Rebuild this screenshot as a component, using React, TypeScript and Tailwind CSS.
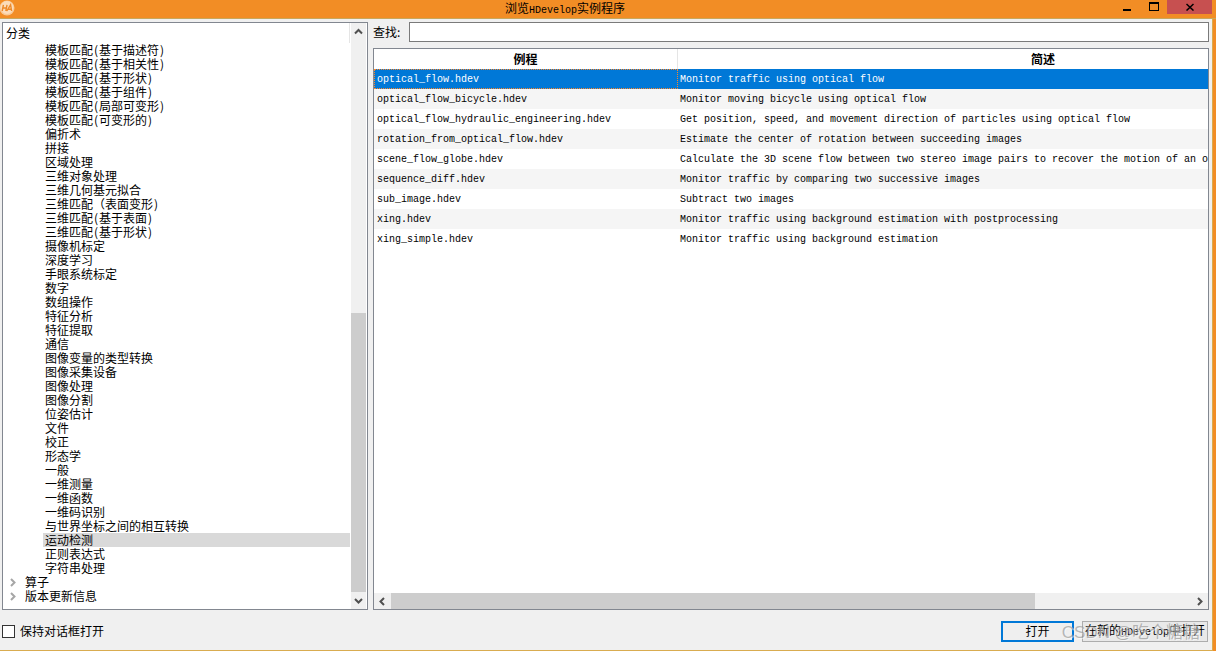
import { useState } from 'react';
import { clsx } from 'clsx';

interface Example {
  file: string;
  description: string;
}

const categories = [
  '模板匹配(基于描述符)',
  '模板匹配(基于相关性)',
  '模板匹配(基于形状)',
  '模板匹配(基于组件)',
  '模板匹配(局部可变形)',
  '模板匹配(可变形的)',
  '偏折术',
  '拼接',
  '区域处理',
  '三维对象处理',
  '三维几何基元拟合',
  '三维匹配（表面变形)',
  '三维匹配(基于表面)',
  '三维匹配(基于形状)',
  '摄像机标定',
  '深度学习',
  '手眼系统标定',
  '数字',
  '数组操作',
  '特征分析',
  '特征提取',
  '通信',
  '图像变量的类型转换',
  '图像采集设备',
  '图像处理',
  '图像分割',
  '位姿估计',
  '文件',
  '校正',
  '形态学',
  '一般',
  '一维测量',
  '一维函数',
  '一维码识别',
  '与世界坐标之间的相互转换',
  '运动检测',
  '正则表达式',
  '字符串处理'
];

const closedGroups = ['算子', '版本更新信息'];

const examples: Example[] = [
  { file: 'optical_flow.hdev', description: 'Monitor traffic using optical flow' },
  { file: 'optical_flow_bicycle.hdev', description: 'Monitor moving bicycle using optical flow' },
  {
    file: 'optical_flow_hydraulic_engineering.hdev',
    description: 'Get position, speed, and movement direction of particles using optical flow'
  },
  {
    file: 'rotation_from_optical_flow.hdev',
    description: 'Estimate the center of rotation between succeeding images'
  },
  {
    file: 'scene_flow_globe.hdev',
    description: 'Calculate the 3D scene flow between two stereo image pairs to recover the motion of an object'
  },
  { file: 'sequence_diff.hdev', description: 'Monitor traffic by comparing two successive images' },
  { file: 'sub_image.hdev', description: 'Subtract two images' },
  { file: 'xing.hdev', description: 'Monitor traffic using background estimation with postprocessing' },
  { file: 'xing_simple.hdev', description: 'Monitor traffic using background estimation' }
];

// Latin runs and brackets take half the width of a Chinese glyph
const MixedText = ({ text }: { text: string }) => (
  <>
    {text.split(/([()]|[A-Za-z]+)/).map((part, i) => {
      if (i % 2 === 0) return part;
      return part === '(' || part === ')' ? (
        <span key={i} className="inline-block w-1.5 text-center">
          {part}
        </span>
      ) : (
        <span key={i} className="font-['Liberation_Mono',monospace] text-[10px]">
          {part}
        </span>
      );
    })}
  </>
);

const arrowPaths = {
  up: 'M1 6.5 L4.5 3 L8 6.5',
  down: 'M1 3 L4.5 6.5 L8 3',
  left: 'M6 1 L2.5 4.5 L6 8',
  right: 'M3 1 L6.5 4.5 L3 8'
};

const Arrow = ({ dir, className }: { dir: keyof typeof arrowPaths; className?: string }) => (
  <svg viewBox="0 0 9 9" className={clsx('size-[9px]', className)} fill="none" stroke="currentColor" strokeWidth="2">
    <path d={arrowPaths[dir]} />
  </svg>
);

const TitleBar = () => (
  <header className="flex h-[19px] border-b border-[#c9a75c] bg-[#f28d25]">
    <svg viewBox="0 0 16 16" className="size-4 shrink-0">
      <circle cx="7" cy="8" r="7.5" fill="#f9c893" />
      <circle cx="7" cy="7.5" r="6.5" fill="#fbdcb9" />
      <path
        d="M3.4 4.8 L2.2 11 M7 4.8 L5.8 11 M2.8 8 H6.4 M6.8 11 L10.6 4.8 L11.6 11 M8.4 9.2 H11.2"
        fill="none"
        stroke="#ee8a2a"
        strokeWidth="1.4"
      />
    </svg>
    <h1 className="flex-1 text-center leading-4">
      <MixedText text="浏览HDevelop实例程序" />
    </h1>
    <button aria-label="最小化" className="flex h-3.5 w-[27px] justify-center">
      <svg viewBox="0 0 10 12" className="h-3 w-2.5">
        <path d="M0 9h8v2H0z" />
      </svg>
    </button>
    <button aria-label="最大化" className="flex h-3.5 w-[26px] justify-center">
      <svg viewBox="0 0 10 12" className="h-3 w-2.5">
        <path d="M0 2h10v9H0zM1 4v6h8V4z" fillRule="evenodd" />
      </svg>
    </button>
    <button aria-label="关闭" className="mr-1 flex h-3.5 w-[45px] items-center justify-center bg-[#c75050]">
      <svg viewBox="0 0 8 8" className="size-2" stroke="black" strokeWidth="1.5">
        <path d="M0.5 1 L7.5 7.5 M7.5 1 L0.5 7.5" />
      </svg>
    </button>
  </header>
);

interface CategoryTreeProps {
  selected: string;
  onSelect: (name: string) => void;
}

const CategoryTree = ({ selected, onSelect }: CategoryTreeProps) => (
  <section className="flex w-[366px] shrink-0 border border-[#828790] bg-white">
    <div className="min-w-0 flex-1">
      <h2 className="h-5 border-r border-[#e5e5e5] pl-[3px] leading-5">分类</h2>
      <ul>
        {categories.map((name) => (
          <li key={name} className="pl-10">
            <button
              onClick={() => onSelect(name)}
              className={clsx(
                'block h-3.5 w-full pl-0.5 text-left leading-3.5 whitespace-nowrap',
                name === selected && 'bg-[#d9d9d9]'
              )}
            >
              <MixedText text={name} />
            </button>
          </li>
        ))}
        {closedGroups.map((name) => (
          <li key={name}>
            <button className="flex h-3.5 w-full items-center gap-2 pl-[5px] leading-3.5">
              <Arrow dir="right" className="text-[#a6a6a6]" />
              {name}
            </button>
          </li>
        ))}
      </ul>
    </div>
    <div className="mr-px flex w-4 flex-col border-l border-white bg-[#f0f0f0] text-[#505050]">
      <button aria-label="向上滚动" className="flex h-[17px] items-center justify-center">
        <Arrow dir="up" />
      </button>
      <div className="flex-[273]" />
      <div className="flex-[279] bg-[#cdcdcd]" />
      <button aria-label="向下滚动" className="flex h-[17px] items-center justify-center">
        <Arrow dir="down" />
      </button>
    </div>
  </section>
);

const ExampleTable = () => {
  const [current, setCurrent] = useState('optical_flow.hdev');

  return (
    <div className="flex flex-1 flex-col overflow-hidden border border-[#828790] bg-white">
      <div className="flex-1 overflow-hidden">
        <table className="w-[1034px] table-fixed border-separate border-spacing-0">
          <thead>
            <tr className="h-5">
              <th className="w-[304px] border-r border-[#e5e5e5] p-0 leading-5">例程</th>
              <th className="p-0 leading-5">简述</th>
            </tr>
          </thead>
          <tbody className="font-['Liberation_Mono',monospace] text-[10px]">
            {examples.map(({ file, description }) => (
              <tr
                key={file}
                onClick={() => setCurrent(file)}
                className={clsx(
                  'h-5 whitespace-nowrap',
                  file === current ? 'bg-[#0078d7] text-white' : 'even:bg-[#f5f5f5]'
                )}
              >
                <td
                  className={clsx(
                    'p-0 pt-0.5 pl-[3px] leading-[18px]',
                    file === current && 'outline-1 -outline-offset-1 outline-dotted outline-[#ff8728]'
                  )}
                >
                  {file}
                </td>
                <td className="p-0 pt-0.5 pl-0.5 leading-[18px]">{description}</td>
              </tr>
            ))}
          </tbody>
        </table>
      </div>
      <div className="flex h-4 bg-[#f0f0f0] text-[#505050]">
        <button aria-label="向左滚动" className="flex w-[17px] items-center justify-center">
          <Arrow dir="left" />
        </button>
        <div className="flex-[644] bg-[#cdcdcd]" />
        <div className="flex-[156]" />
        <button aria-label="向右滚动" className="flex w-[17px] items-center justify-center">
          <Arrow dir="right" />
        </button>
      </div>
    </div>
  );
};

export default function App() {
  const [category, setCategory] = useState('运动检测');
  const [query, setQuery] = useState('');
  const [keepOpen, setKeepOpen] = useState(false);

  return (
    <div className="flex min-h-screen flex-col bg-[#f28d25] font-['Noto_Sans_CJK_SC',sans-serif] text-xs text-black">
      <TitleBar />
      <div className="mr-[3px] flex flex-1 flex-col border-r border-b border-[#d9ac50] bg-[#f0f0f0]">
        <main className="flex flex-1 gap-[5px] pt-[3px] pr-[3px] pl-0.5">
          <CategoryTree selected={category} onSelect={setCategory} />
          <section className="flex min-w-0 flex-1 flex-col gap-1.5">
            <div className="flex h-5 items-center">
              <label htmlFor="search" className="w-9 shrink-0 whitespace-nowrap">
                查找:
              </label>
              <input
                id="search"
                type="text"
                value={query}
                onChange={(e) => setQuery(e.target.value)}
                className="h-5 min-w-0 flex-1 border border-[#7a7a7a] bg-white px-1 outline-none"
              />
            </div>
            <ExampleTable />
          </section>
        </main>
        <footer className="flex h-10 items-center gap-2 pt-0.5 pr-1 pl-0.5">
          <label className="mr-auto flex items-center gap-[5px]">
            <input
              type="checkbox"
              checked={keepOpen}
              onChange={(e) => setKeepOpen(e.target.checked)}
              className="size-[13px] appearance-none border border-[#333333] bg-white checked:bg-[#0078d7]"
            />
            保持对话框打开
          </label>
          <button className="h-[21px] w-[73px] border-2 border-[#0078d7] bg-[#efefef] leading-4">打开</button>
          <div className="relative flex">
            <button className="h-[21px] w-[126px] border border-[#adadad] bg-[#e9e9e9] leading-4 whitespace-nowrap">
              <MixedText text="在新的HDevelop中打开" />
            </button>
            <span className="pointer-events-none absolute top-0 right-2 font-['Liberation_Sans','Noto_Sans_CJK_SC',sans-serif] text-[17px] leading-6 whitespace-nowrap text-[#8c8c8c]/60 text-shadow-[1px_1px_0_#ffffff80]">
              CSDN @吃个糖糖
            </span>
          </div>
        </footer>
      </div>
    </div>
  );
}
